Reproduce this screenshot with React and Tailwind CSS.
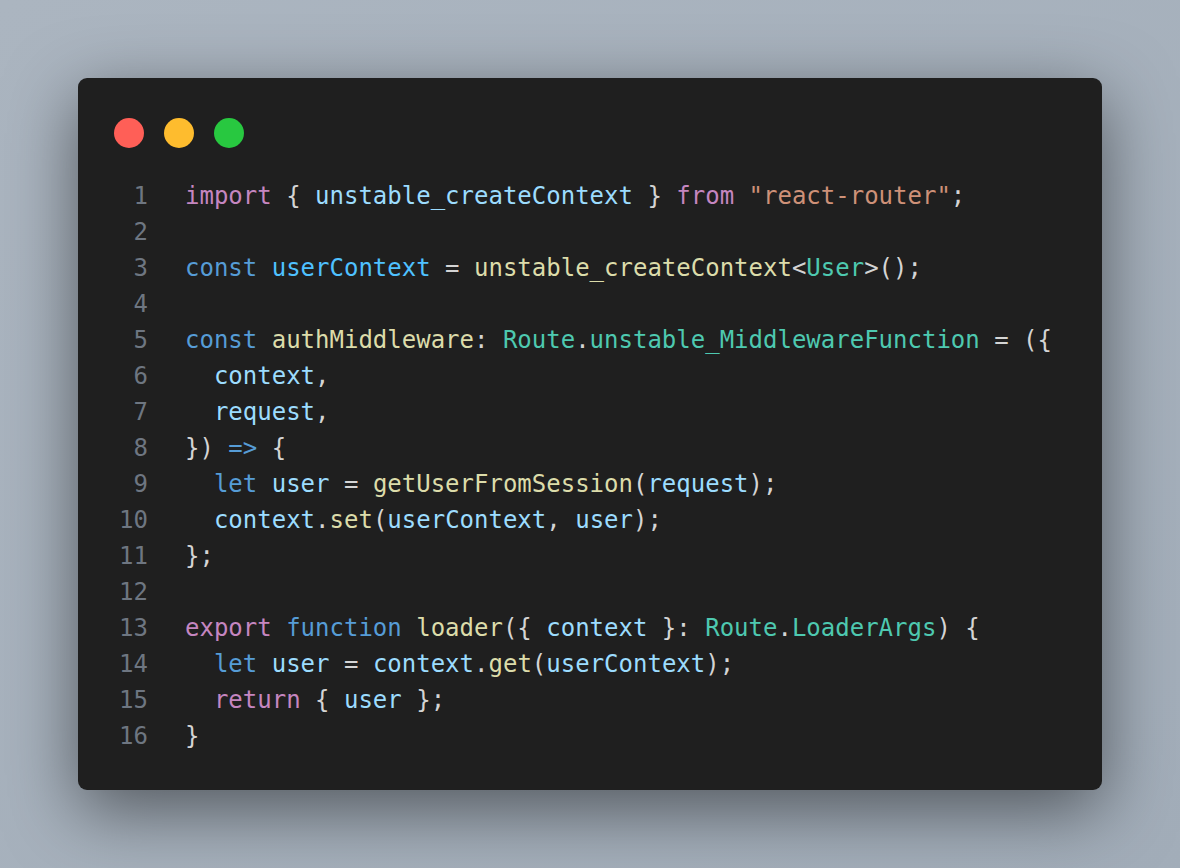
const P = "text-[#c586c0]";
const B = "text-[#569cd6]";
const V = "text-[#9cdcfe]";
const C = "text-[#4fc1ff]";
const F = "text-[#dcdcaa]";
const T = "text-[#4ec9b0]";
const S = "text-[#ce9178]";
const D = "text-[#d4d4d4]";

const lines = [
  [[P, "import"], [D, " { "], [V, "unstable_createContext"], [D, " } "], [P, "from"], [D, " "], [S, "\"react-router\""], [D, ";"]],
  [],
  [[B, "const"], [D, " "], [C, "userContext"], [D, " = "], [F, "unstable_createContext"], [D, "<"], [T, "User"], [D, ">();"]],
  [],
  [[B, "const"], [D, " "], [F, "authMiddleware"], [D, ": "], [T, "Route"], [D, "."], [T, "unstable_MiddlewareFunction"], [D, " = ({"]],
  [[D, "  "], [V, "context"], [D, ","]],
  [[D, "  "], [V, "request"], [D, ","]],
  [[D, "}) "], [B, "=>"], [D, " {"]],
  [[D, "  "], [B, "let"], [D, " "], [V, "user"], [D, " = "], [F, "getUserFromSession"], [D, "("], [V, "request"], [D, ");"]],
  [[D, "  "], [V, "context"], [D, "."], [F, "set"], [D, "("], [V, "userContext"], [D, ", "], [V, "user"], [D, ");"]],
  [[D, "};"]],
  [],
  [[P, "export"], [D, " "], [B, "function"], [D, " "], [F, "loader"], [D, "({ "], [V, "context"], [D, " }: "], [T, "Route"], [D, "."], [T, "LoaderArgs"], [D, ") {"]],
  [[D, "  "], [B, "let"], [D, " "], [V, "user"], [D, " = "], [V, "context"], [D, "."], [F, "get"], [D, "("], [V, "userContext"], [D, ");"]],
  [[D, "  "], [P, "return"], [D, " { "], [V, "user"], [D, " };"]],
  [[D, "}"]],
];

export default function App() {
  return (
    <div className="w-[1180px] h-[868px] bg-gradient-to-br from-[#abb5c0] to-[#a2adb9] pt-[78px] pl-[78px]">
      <div className="w-[1024px] h-[712px] bg-[#1f1f1f] rounded-[9px] shadow-[0_20px_70px_rgba(0,0,0,0.5)] pt-[40px] pl-[36px]">
        <div className="flex gap-[20px]">
          <div className="w-[30px] h-[30px] rounded-full bg-[#ff5f57]" />
          <div className="w-[30px] h-[30px] rounded-full bg-[#febc2e]" />
          <div className="w-[30px] h-[30px] rounded-full bg-[#28c840]" />
        </div>
        <div className="mt-[30px] text-[24px] leading-[36px] whitespace-pre" style={{ fontFamily: '"DejaVu Sans Mono", "Liberation Mono", monospace' }}>
          {lines.map((l, i) => (
            <div key={i} className="flex h-[36px]">
              <span className="w-[34px] text-right text-[#6e7681] shrink-0">{i + 1}</span>
              <span className="ml-[37px]">
                {l.map(([c, t], j) => (
                  <span key={j} className={c}>{t}</span>
                ))}
              </span>
            </div>
          ))}
        </div>
      </div>
    </div>
  );
}
